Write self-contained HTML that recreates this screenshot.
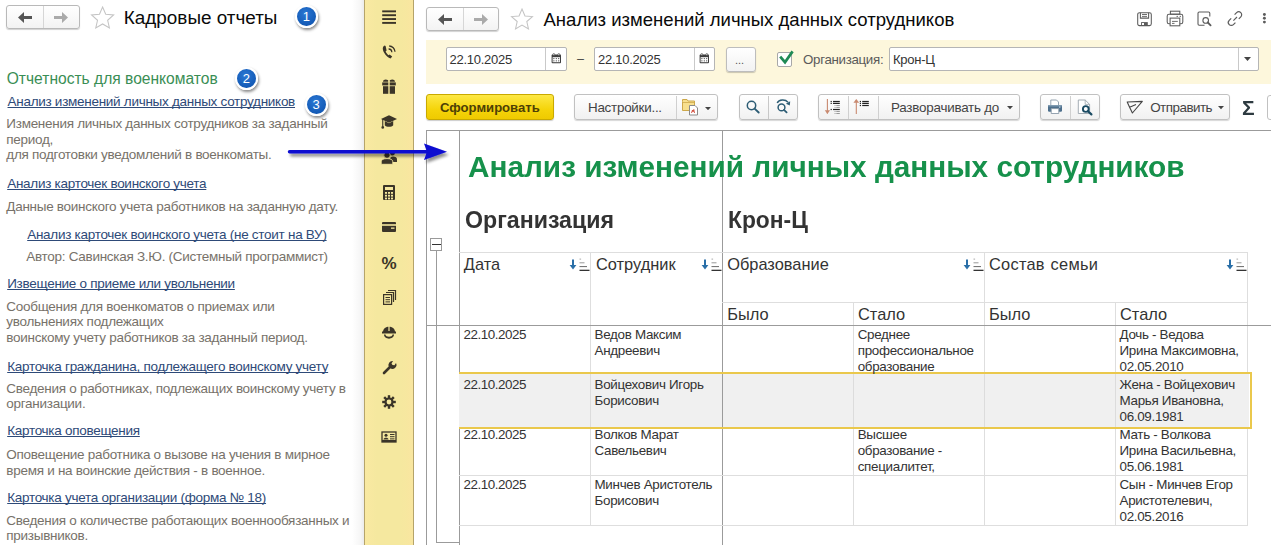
<!DOCTYPE html>
<html><head><meta charset="utf-8"><style>
html,body{margin:0;padding:0;width:1271px;height:545px;overflow:hidden;background:#fff}
body{position:relative;font-family:"Liberation Sans",sans-serif}
.a{position:absolute;display:block}
.t{position:absolute;white-space:nowrap;font-family:"Liberation Sans",sans-serif}
.badge{border-radius:50%;background:radial-gradient(circle at 45% 35%,#2a78d4,#1258b4 75%);border:2.5px solid #fff;box-sizing:border-box;box-shadow:1px 2px 3px rgba(0,0,0,.45);color:#fff;font:13px/19.5px "Liberation Sans",sans-serif;text-align:center}
</style></head><body>
<div class="a" style="left:0px;top:0px;width:364px;height:545px;background:#fff"></div>
<div class="a" style="left:352px;top:0px;width:12px;height:545px;background:linear-gradient(90deg,rgba(0,0,0,0),rgba(0,0,0,.035) 70%,rgba(0,0,0,.08))"></div>
<div class="a" style="left:6px;top:5px;width:74px;height:24px;border:1px solid #b9b9b9;border-radius:3px;background:linear-gradient(#ffffff,#f3f3f3);box-shadow:0 1px 1px rgba(0,0,0,.18);box-sizing:border-box"></div>
<div class="a" style="left:43px;top:6px;width:1px;height:22px;background:#d6d6d6"></div>
<svg class="a" style="left:18px;top:12px;" width="14" height="11" viewBox="0 0 14 11"><path d="M0 5.5 L6 0 L6 4 L14 4 L14 7 L6 7 L6 11 Z" fill="#555"/></svg>
<svg class="a" style="left:54px;top:12px;" width="14" height="11" viewBox="0 0 14 11"><path d="M14 5.5 L8 0 L8 4 L0 4 L0 7 L8 7 L8 11 Z" fill="#aaa"/></svg>
<svg class="a" style="left:88.80000000000001px;top:5px;" width="27.2" height="27.2" viewBox="0 0 27.2 27.2"><path d="M13.60 2.00 L16.74 9.28 L24.63 10.02 L18.67 15.25 L20.42 22.98 L13.60 18.94 L6.78 22.98 L8.53 15.25 L2.57 10.02 L10.46 9.28 Z" fill="none" stroke="#c4c4c4" stroke-width="1.05" stroke-linejoin="miter"/></svg>
<div class="t" style="left:123.8px;top:8.50px;font-size:18.9px;line-height:18.9px;color:#0a0a0a;font-weight:400;">Кадровые отчеты</div>
<div class="a badge" style="left:295.0px;top:4.9px;width:22.8px;height:22.8px">1</div>
<div class="t" style="left:6.7px;top:70.59px;font-size:15.6px;line-height:15.6px;color:#3a8e55;font-weight:400;">Отчетность для военкоматов</div>
<div class="a badge" style="left:234.9px;top:67.1px;width:22.8px;height:22.8px">2</div>
<div class="t" style="left:7.5px;top:95.17px;font-size:13.5px;line-height:13.5px;color:#2e4a78;font-weight:400;letter-spacing:-0.28px;text-decoration:underline;text-decoration-skip-ink:none;text-underline-offset:0.6px">Анализ изменений личных данных сотрудников</div>
<div class="a badge" style="left:304.8px;top:93.19999999999999px;width:22.8px;height:22.8px">3</div>
<div class="t" style="left:6.3px;top:116.37px;font-size:13.5px;line-height:15.5px;color:#77726a;font-weight:400;letter-spacing:-0.28px;">Изменения личных данных сотрудников за заданный</div>
<div class="t" style="left:6.3px;top:131.87px;font-size:13.5px;line-height:15.5px;color:#77726a;font-weight:400;letter-spacing:-0.28px;">период,</div>
<div class="t" style="left:6.3px;top:147.37px;font-size:13.5px;line-height:15.5px;color:#77726a;font-weight:400;letter-spacing:-0.28px;">для подготовки уведомлений в военкоматы.</div>
<div class="t" style="left:7.2px;top:177.07px;font-size:13.5px;line-height:13.5px;color:#2e4a78;font-weight:400;letter-spacing:-0.28px;text-decoration:underline;text-decoration-skip-ink:none;text-underline-offset:0.6px">Анализ карточек воинского учета</div>
<div class="t" style="left:6.3px;top:198.67px;font-size:13.5px;line-height:15.5px;color:#77726a;font-weight:400;letter-spacing:-0.28px;">Данные воинского учета работников на заданную дату.</div>
<div class="t" style="left:27.2px;top:227.77px;font-size:13.5px;line-height:13.5px;color:#2e4a78;font-weight:400;letter-spacing:-0.28px;text-decoration:underline;text-decoration-skip-ink:none;text-underline-offset:0.6px">Анализ карточек воинского учета (не стоит на ВУ)</div>
<div class="t" style="left:26.2px;top:248.87px;font-size:13.5px;line-height:15.5px;color:#77726a;font-weight:400;letter-spacing:-0.28px;">Автор: Савинская З.Ю. (Системный программист)</div>
<div class="t" style="left:7.2px;top:277.17px;font-size:13.5px;line-height:13.5px;color:#2e4a78;font-weight:400;letter-spacing:-0.28px;text-decoration:underline;text-decoration-skip-ink:none;text-underline-offset:0.6px">Извещение о приеме или увольнении</div>
<div class="t" style="left:6.3px;top:298.57px;font-size:13.5px;line-height:15.5px;color:#77726a;font-weight:400;letter-spacing:-0.28px;">Сообщения для военкоматов о приемах или</div>
<div class="t" style="left:6.3px;top:314.07px;font-size:13.5px;line-height:15.5px;color:#77726a;font-weight:400;letter-spacing:-0.28px;">увольнениях подлежащих</div>
<div class="t" style="left:6.3px;top:329.57px;font-size:13.5px;line-height:15.5px;color:#77726a;font-weight:400;letter-spacing:-0.28px;">воинскому учету работников за заданный период.</div>
<div class="t" style="left:7.2px;top:359.77px;font-size:13.5px;line-height:13.5px;color:#2e4a78;font-weight:400;letter-spacing:-0.28px;text-decoration:underline;text-decoration-skip-ink:none;text-underline-offset:0.6px">Карточка гражданина, подлежащего воинскому учету</div>
<div class="t" style="left:6.3px;top:380.77px;font-size:13.5px;line-height:15.5px;color:#77726a;font-weight:400;letter-spacing:-0.28px;">Сведения о работниках, подлежащих воинскому учету в</div>
<div class="t" style="left:6.3px;top:396.27px;font-size:13.5px;line-height:15.5px;color:#77726a;font-weight:400;letter-spacing:-0.28px;">организации.</div>
<div class="t" style="left:7.2px;top:424.37px;font-size:13.5px;line-height:13.5px;color:#2e4a78;font-weight:400;letter-spacing:-0.28px;text-decoration:underline;text-decoration-skip-ink:none;text-underline-offset:0.6px">Карточка оповещения</div>
<div class="t" style="left:6.3px;top:446.82px;font-size:13.5px;line-height:15.8px;color:#77726a;font-weight:400;letter-spacing:-0.28px;">Оповещение работника о вызове на учения в мирное</div>
<div class="t" style="left:6.3px;top:462.62px;font-size:13.5px;line-height:15.8px;color:#77726a;font-weight:400;letter-spacing:-0.28px;">время и на воинские действия - в военное.</div>
<div class="t" style="left:7.2px;top:490.87px;font-size:13.5px;line-height:13.5px;color:#2e4a78;font-weight:400;letter-spacing:-0.28px;text-decoration:underline;text-decoration-skip-ink:none;text-underline-offset:0.6px">Карточка учета организации (форма № 18)</div>
<div class="t" style="left:6.3px;top:512.67px;font-size:13.5px;line-height:15.7px;color:#77726a;font-weight:400;letter-spacing:-0.28px;">Сведения о количестве работающих военнообязанных и</div>
<div class="t" style="left:6.3px;top:528.37px;font-size:13.5px;line-height:15.7px;color:#77726a;font-weight:400;letter-spacing:-0.28px;">призывников.</div>
<div class="a" style="left:364px;top:0px;width:50px;height:545px;background:linear-gradient(90deg,#f9e9a2,#f5e89f 25%,#f5e89f 75%,#f9e6a0);border-left:1px solid #b5a46a;border-right:1px solid #b5a46a;box-sizing:border-box"></div>
<svg class="a" style="left:380.0px;top:9.0px;" width="18" height="16" viewBox="0 0 18 16"><rect x="2.2" y="1.40" width="13.8" height="1.9" fill="#3b3528"/><rect x="2.2" y="5.25" width="13.8" height="1.9" fill="#3b3528"/><rect x="2.2" y="9.10" width="13.8" height="1.9" fill="#3b3528"/><rect x="2.2" y="12.95" width="13.8" height="1.9" fill="#3b3528"/></svg>
<svg class="a" style="left:380.0px;top:44.0px;" width="18" height="16" viewBox="0 0 18 16"><path d="M4.6 1.6 C2.6 2.6 2.2 5.2 4 8.6 C5.8 12 8.4 14.2 10.6 14.4 L12.2 12.6 L9.6 10.4 L8.6 11.2 C7.4 10.4 6.2 8.8 5.6 7.4 L6.6 6.4 L5.6 2 Z" fill="#3b3528"/><path d="M8.6 5 A3.2 3.2 0 0 1 11.8 8.2" stroke="#3b3528" stroke-width="1.3" fill="none"/><path d="M9.2 2 A6 6 0 0 1 15 7.8" stroke="#3b3528" stroke-width="1.3" fill="none"/></svg>
<svg class="a" style="left:380.0px;top:78.0px;" width="18" height="16" viewBox="0 0 18 16"><path d="M3 3.8 C3 0.6 8.6 0.6 8.6 3.8 Z M9.4 3.8 C9.4 0.6 15 0.6 15 3.8 Z" fill="#3b3528"/><rect x="2.2" y="4.4" width="13.6" height="3" fill="#3b3528"/><rect x="3" y="8.2" width="12" height="7.6" fill="#3b3528"/><rect x="8.3" y="3" width="1.4" height="13" fill="#f5e89f"/></svg>
<svg class="a" style="left:380.0px;top:114.0px;" width="18" height="16" viewBox="0 0 18 16"><path d="M1 5 L9 1.2 L17 5 L9 8.8 Z" fill="#3b3528"/><path d="M4.8 7 L4.8 11.2 C6.2 13.4 11.8 13.4 13.2 11.2 L13.2 7 L9 9.2 Z" fill="#3b3528"/><rect x="2.2" y="5" width="1.1" height="7.5" fill="#3b3528"/><circle cx="2.75" cy="13.4" r="1.3" fill="#3b3528"/></svg>
<svg class="a" style="left:380.0px;top:149.0px;" width="18" height="16" viewBox="0 0 18 16"><circle cx="12.3" cy="3.8" r="2.6" fill="#3b3528"/><path d="M10 13 V10.5 C10 8.5 11 7.6 13 7.6 C15.5 7.6 17 8.5 17 10.5 V13 Z" fill="#3b3528"/><g stroke="#f5e89f" stroke-width="0.9"><circle cx="7" cy="6.2" r="3.2" fill="#3b3528"/><path d="M1.2 15.3 V12.8 C1.2 10.6 3.5 9.6 7 9.6 C10.5 9.6 12.8 10.6 12.8 12.8 V15.3 Z" fill="#3b3528"/></g></svg>
<svg class="a" style="left:380.0px;top:184.0px;" width="18" height="16" viewBox="0 0 18 16"><rect x="3" y="1" width="12" height="15" rx="1" fill="#3b3528"/><rect x="5" y="3" width="8" height="3" fill="#f5e89f"/><rect x="5" y="8.0" width="2" height="1.8" fill="#f5e89f"/><rect x="5" y="10.8" width="2" height="1.8" fill="#f5e89f"/><rect x="5" y="13.6" width="2" height="1.8" fill="#f5e89f"/><rect x="8" y="8.0" width="2" height="1.8" fill="#f5e89f"/><rect x="8" y="10.8" width="2" height="1.8" fill="#f5e89f"/><rect x="8" y="13.6" width="2" height="1.8" fill="#f5e89f"/><rect x="11" y="8.0" width="2" height="1.8" fill="#f5e89f"/><rect x="11" y="10.8" width="2" height="1.8" fill="#f5e89f"/><rect x="11" y="13.6" width="2" height="1.8" fill="#f5e89f"/></svg>
<svg class="a" style="left:380.0px;top:219.0px;" width="18" height="16" viewBox="0 0 18 16"><rect x="2" y="3" width="14" height="10" rx="1" fill="#3b3528"/><rect x="2" y="5.2" width="14" height="1.6" fill="#f5e89f"/><rect x="11" y="8.5" width="3.5" height="1.3" fill="#f5e89f"/></svg>
<div class="t" style="left:380px;top:255px;font-size:17px;line-height:18px;font-weight:700;color:#3b3528;width:18px;text-align:center">%</div>
<svg class="a" style="left:380.0px;top:289.0px;" width="18" height="16" viewBox="0 0 18 16"><path d="M8 1.5 H15.5 V11" fill="none" stroke="#3b3528" stroke-width="1.2"/><path d="M6 3.5 H13.5 V13" fill="none" stroke="#3b3528" stroke-width="1.2"/><rect x="3.6" y="5.6" width="8" height="9.8" fill="none" stroke="#3b3528" stroke-width="1.2"/><path d="M5.5 8.5 H10 M5.5 10.7 H10 M5.5 12.9 H10" stroke="#3b3528" stroke-width="1"/></svg>
<svg class="a" style="left:380.0px;top:324.0px;" width="18" height="16" viewBox="0 0 18 16"><path d="M3 8 C3 1 15 1 15 8 Z" fill="#3b3528"/><rect x="2" y="7.5" width="14" height="2" fill="#3b3528"/><path d="M4 10.5 C4 16 14 16 14 10.5 L12.5 10.5 C12.5 13.5 5.5 13.5 5.5 10.5 Z" fill="#3b3528"/><rect x="8.4" y="2" width="1.2" height="5" fill="#f5e89f"/></svg>
<svg class="a" style="left:380.0px;top:359.0px;" width="18" height="16" viewBox="0 0 18 16"><path d="M4 14 L10 8" stroke="#3b3528" stroke-width="2.6" stroke-linecap="round"/><path d="M9 8 A4 4 0 0 1 13 2 L11.5 4.5 L12.5 6 L14.5 6.3 L16 4 A4 4 0 0 1 10 9 Z" fill="#3b3528"/></svg>
<svg class="a" style="left:380.0px;top:394.0px;" width="18" height="16" viewBox="0 0 18 16"><circle cx="9" cy="8" r="4.6" fill="#3b3528"/><rect x="7.8" y="1.2" width="2.4" height="13.6" fill="#3b3528" transform="rotate(0 9 8)"/><rect x="7.8" y="1.2" width="2.4" height="13.6" fill="#3b3528" transform="rotate(45 9 8)"/><rect x="7.8" y="1.2" width="2.4" height="13.6" fill="#3b3528" transform="rotate(90 9 8)"/><rect x="7.8" y="1.2" width="2.4" height="13.6" fill="#3b3528" transform="rotate(135 9 8)"/><circle cx="9" cy="8" r="2.4" fill="#f5e89f"/></svg>
<svg class="a" style="left:380.0px;top:429.0px;" width="18" height="16" viewBox="0 0 18 16"><rect x="2" y="3" width="14" height="10" fill="none" stroke="#3b3528" stroke-width="1.3"/><rect x="2" y="11" width="14" height="2" fill="#3b3528"/><circle cx="6" cy="6.3" r="1.5" fill="#3b3528"/><path d="M3.5 10.5 C3.5 8 8.5 8 8.5 10.5 Z" fill="#3b3528"/><path d="M10 5.5 H14.5 M10 7.7 H14.5 M10 9.9 H14.5" stroke="#3b3528" stroke-width="1"/></svg>
<div class="a" style="left:414px;top:0px;width:857px;height:545px;background:#fff"></div>
<div class="a" style="left:426px;top:7px;width:73px;height:24px;border:1px solid #b9b9b9;border-radius:3px;background:linear-gradient(#ffffff,#f3f3f3);box-shadow:0 1px 1px rgba(0,0,0,.18);box-sizing:border-box"></div>
<div class="a" style="left:463px;top:8px;width:1px;height:22px;background:#d6d6d6"></div>
<svg class="a" style="left:438px;top:14px;" width="14" height="11" viewBox="0 0 14 11"><path d="M0 5.5 L6 0 L6 4 L14 4 L14 7 L6 7 L6 11 Z" fill="#555"/></svg>
<svg class="a" style="left:474px;top:14px;" width="14" height="11" viewBox="0 0 14 11"><path d="M14 5.5 L8 0 L8 4 L0 4 L0 7 L8 7 L8 11 Z" fill="#aaa"/></svg>
<svg class="a" style="left:509px;top:7px;" width="26" height="26" viewBox="0 0 26 26"><path d="M13.00 2.00 L15.97 8.91 L23.46 9.60 L17.81 14.56 L19.47 21.90 L13.00 18.06 L6.53 21.90 L8.19 14.56 L2.54 9.60 L10.03 8.91 Z" fill="none" stroke="#c4c4c4" stroke-width="1.05" stroke-linejoin="miter"/></svg>
<div class="t" style="left:543.5px;top:10.90px;font-size:18.55px;line-height:18.55px;color:#0a0a0a;font-weight:400;">Анализ изменений личных данных сотрудников</div>
<svg class="a" style="left:1136px;top:11px;" width="17" height="16" viewBox="0 0 17 16"><rect x="1.7" y="1.7" width="13.6" height="12.9" rx="1.8" fill="none" stroke="#5c5c5c" stroke-width="1.05"/><path d="M4.4 1.7 V7.1 H12.6 V1.7" fill="none" stroke="#5c5c5c" stroke-width="1.05"/><path d="M6 3.5 H11 M6 5.4 H11" stroke="#5c5c5c" stroke-width="0.9"/><rect x="5.1" y="11.1" width="6.7" height="3.5" fill="#5c5c5c"/><rect x="6" y="12" width="2" height="2" fill="#fff"/></svg>
<svg class="a" style="left:1166px;top:10px;" width="18" height="17" viewBox="0 0 18 17"><rect x="4.4" y="1.2" width="9.4" height="3" fill="none" stroke="#5c5c5c" stroke-width="1.05"/><rect x="1.2" y="4.2" width="15.6" height="9.6" rx="1.8" fill="none" stroke="#5c5c5c" stroke-width="1.05"/><rect x="4.1" y="8.1" width="9.7" height="7.7" fill="#fff" stroke="#5c5c5c" stroke-width="1.05"/><path d="M6 11.4 H11.8 M6 13.4 H8.5" stroke="#5c5c5c" stroke-width="0.9"/><path d="M10.5 6.4 H12 M13.6 6.4 H15" stroke="#5c5c5c" stroke-width="0.9"/></svg>
<svg class="a" style="left:1196px;top:10px;" width="17" height="17" viewBox="0 0 17 17"><path d="M8.5 15.3 H3.2 A1.2 1.2 0 0 1 2 14.1 V3.2 A1.2 1.2 0 0 1 3.2 2 H12.6 A1.2 1.2 0 0 1 13.8 3.2 V6.6" fill="none" stroke="#5c5c5c" stroke-width="1.1"/><circle cx="9.7" cy="10.4" r="2.8" fill="#fff" stroke="#5c5c5c" stroke-width="1.1"/><path d="M11.8 12.5 L14.6 15.3" stroke="#5c5c5c" stroke-width="1.8" stroke-linecap="round"/></svg>
<svg class="a" style="left:1226px;top:10px;" width="17" height="17" viewBox="0 0 17 17"><path d="M7.4 10.6 L11 7" stroke="#5c5c5c" stroke-width="1.1"/><path d="M8.6 4.6 L10.6 2.6 A2.9 2.9 0 0 1 14.8 6.8 L12.8 8.8" fill="none" stroke="#5c5c5c" stroke-width="1.2"/><path d="M9.4 12.6 L7.4 14.6 A2.9 2.9 0 0 1 3.2 10.4 L5.2 8.4" fill="none" stroke="#5c5c5c" stroke-width="1.2"/></svg>
<svg class="a" style="left:1262px;top:12px;" width="5" height="14" viewBox="0 0 5 14"><circle cx="2.4" cy="2.5" r="1.45" fill="#5c5c5c"/><circle cx="2.4" cy="6.3" r="1.45" fill="#5c5c5c"/><circle cx="2.4" cy="10.1" r="1.45" fill="#5c5c5c"/></svg>
<div class="a" style="left:426px;top:40px;width:845px;height:43.5px;background:#fdf7dc"></div>
<div class="a" style="left:445.5px;top:47.3px;width:121px;height:24px;background:#fff;border:1px solid #b5b5b5;border-radius:2px;box-sizing:border-box"></div>
<div class="a" style="left:545.0px;top:48.3px;width:1px;height:22.0px;background:#c9c9c9"></div>
<div class="t" style="left:449.5px;top:53.20px;font-size:13px;line-height:13px;color:#333;font-weight:400;letter-spacing:-0.27px">22.10.2025</div>
<svg class="a" style="left:550.6px;top:52.6px;" width="11" height="11" viewBox="0 0 11 11"><rect x="0.6" y="1.6" width="9.4" height="8.6" rx="0.9" fill="#3e3e3e"/><rect x="1.6" y="4.2" width="7.4" height="5" fill="#fff"/><circle cx="2.9" cy="5.6" r="0.62" fill="#3e3e3e"/><circle cx="2.9" cy="7.8" r="0.62" fill="#3e3e3e"/><circle cx="5.3" cy="5.6" r="0.62" fill="#3e3e3e"/><circle cx="5.3" cy="7.8" r="0.62" fill="#3e3e3e"/><circle cx="7.7" cy="5.6" r="0.62" fill="#3e3e3e"/><circle cx="7.7" cy="7.8" r="0.62" fill="#3e3e3e"/><circle cx="2.8" cy="1.4" r="0.9" fill="#fff" stroke="#3e3e3e" stroke-width="0.6"/><circle cx="7.8" cy="1.4" r="0.9" fill="#fff" stroke="#3e3e3e" stroke-width="0.6"/></svg>
<div class="t" style="left:577px;top:53.42px;font-size:12.5px;line-height:12.5px;color:#444;font-weight:400;">–</div>
<div class="a" style="left:594px;top:47.3px;width:121px;height:24px;background:#fff;border:1px solid #b5b5b5;border-radius:2px;box-sizing:border-box"></div>
<div class="a" style="left:693.5px;top:48.3px;width:1px;height:22.0px;background:#c9c9c9"></div>
<div class="t" style="left:598px;top:53.20px;font-size:13px;line-height:13px;color:#333;font-weight:400;letter-spacing:-0.27px">22.10.2025</div>
<svg class="a" style="left:699.3px;top:52.6px;" width="11" height="11" viewBox="0 0 11 11"><rect x="0.6" y="1.6" width="9.4" height="8.6" rx="0.9" fill="#3e3e3e"/><rect x="1.6" y="4.2" width="7.4" height="5" fill="#fff"/><circle cx="2.9" cy="5.6" r="0.62" fill="#3e3e3e"/><circle cx="2.9" cy="7.8" r="0.62" fill="#3e3e3e"/><circle cx="5.3" cy="5.6" r="0.62" fill="#3e3e3e"/><circle cx="5.3" cy="7.8" r="0.62" fill="#3e3e3e"/><circle cx="7.7" cy="5.6" r="0.62" fill="#3e3e3e"/><circle cx="7.7" cy="7.8" r="0.62" fill="#3e3e3e"/><circle cx="2.8" cy="1.4" r="0.9" fill="#fff" stroke="#3e3e3e" stroke-width="0.6"/><circle cx="7.8" cy="1.4" r="0.9" fill="#fff" stroke="#3e3e3e" stroke-width="0.6"/></svg>
<div class="a" style="left:726.2px;top:46.5px;width:29.5px;height:25px;border:1px solid #bdbdbd;border-radius:3px;background:linear-gradient(#fff,#f2f2f2);box-shadow:0 1px 1px rgba(0,0,0,.2);box-sizing:border-box"></div>
<div class="t" style="left:735px;top:54.69px;font-size:11px;line-height:11px;color:#555;font-weight:400;">...</div>
<div class="a" style="left:777.3px;top:52.3px;width:14.8px;height:14.5px;background:#fff;border:1px solid #a8a8a8;border-radius:2px;box-sizing:border-box"></div>
<svg class="a" style="left:778px;top:48px;" width="16" height="18" viewBox="0 0 16 18"><path d="M2.2 8.6 L7 14.2 L14.6 3.4" fill="none" stroke="#1f8a55" stroke-width="2.7"/></svg>
<div class="t" style="left:803px;top:52.74px;font-size:13.3px;line-height:13.3px;color:#5a5a5a;font-weight:400;letter-spacing:-0.3px">Организация:</div>
<div class="a" style="left:889px;top:47.2px;width:370px;height:24.3px;background:#fff;border:1px solid #b5b5b5;border-radius:2px;box-sizing:border-box"></div>
<div class="a" style="left:1238px;top:48.2px;width:1px;height:22.299999999999997px;background:#c9c9c9"></div>
<div class="t" style="left:893px;top:53.10px;font-size:13px;line-height:13px;color:#333;font-weight:400;letter-spacing:-0.27px">Крон-Ц</div>
<svg class="a" style="left:1244px;top:57px;" width="8" height="5" viewBox="0 0 8 5"><path d="M0 0 H7 L3.5 4 Z" fill="#444"/></svg>
<div class="a" style="left:426.3px;top:94px;width:127.5px;height:25.8px;border:1px solid #c9a900;border-radius:3px;background:linear-gradient(#fde845,#f5d40a 60%,#efca00);box-shadow:0 1px 1px rgba(0,0,0,.2);box-sizing:border-box"></div>
<div class="t" style="left:440px;top:100.91px;font-size:13.1px;line-height:13.1px;color:#4d4006;font-weight:700;">Сформировать</div>
<div class="a" style="left:574.4px;top:94px;width:143.3px;height:25.5px;border:1px solid #c1c1c1;border-radius:3px;background:linear-gradient(#fff,#f1f1f1);box-shadow:0 1px 1px rgba(0,0,0,.16);box-sizing:border-box;"></div>
<div class="a" style="left:676.4px;top:95.5px;width:1px;height:23.0px;background:#d0d0d0"></div>
<div class="t" style="left:588px;top:100.96px;font-size:13.4px;line-height:13.4px;color:#444;font-weight:400;letter-spacing:-0.25px">Настройки...</div>
<svg class="a" style="left:681px;top:98px;" width="20" height="18" viewBox="0 0 20 18"><path d="M1.5 3.5 V1.5 H6 L7 3 H13.5 V12.5 H1.5 Z" fill="#f7df8e" stroke="#cda84a" stroke-width="1"/><path d="M1.5 4.5 H13.5" stroke="#cda84a" stroke-width="0.8"/><path d="M8.5 7.5 H14 L16.5 10 V17 H8.5 Z" fill="#fff" stroke="#8a8a8a" stroke-width="1"/><path d="M10.5 15 L11.5 12 L12 14 L12.8 11.5 L13.5 15" stroke="#d04a3a" stroke-width="0.9" fill="none"/></svg>
<svg class="a" style="left:705px;top:106.6px;" width="6" height="3.5" viewBox="0 0 6 3.5"><path d="M0 0 H6 L3 3.2 Z" fill="#444"/></svg>
<div class="a" style="left:738.5px;top:94px;width:59.3px;height:25.5px;border:1px solid #c1c1c1;border-radius:3px;background:linear-gradient(#fff,#f1f1f1);box-shadow:0 1px 1px rgba(0,0,0,.16);box-sizing:border-box;"></div>
<div class="a" style="left:768px;top:95.5px;width:1px;height:23.0px;background:#c8c8c8"></div>
<svg class="a" style="left:745px;top:98px;" width="18" height="18" viewBox="0 0 18 18"><circle cx="6.5" cy="7.5" r="4.2" fill="none" stroke="#2d5d75" stroke-width="1.5"/><path d="M9.6 10.6 L13.7 14.5" stroke="#2d5d75" stroke-width="1.9" stroke-linecap="round"/></svg>
<svg class="a" style="left:775px;top:97px;" width="18" height="18" viewBox="0 0 18 18"><circle cx="6.5" cy="10.4" r="3.4" fill="none" stroke="#2d5d75" stroke-width="1.5"/><path d="M9 12.9 L11.6 15.4" stroke="#2d5d75" stroke-width="1.8" stroke-linecap="round"/><path d="M2.2 6 C4 2.5 10 2 13 5.2" fill="none" stroke="#2d5d75" stroke-width="1.5"/><path d="M15.2 4.2 L14.8 8.6 L10.9 6.8 Z" fill="#2d5d75"/></svg>
<div class="a" style="left:818.3px;top:94px;width:201.4px;height:25.5px;border:1px solid #c1c1c1;border-radius:3px;background:linear-gradient(#fff,#f1f1f1);box-shadow:0 1px 1px rgba(0,0,0,.16);box-sizing:border-box;"></div>
<div class="a" style="left:848.4px;top:95.5px;width:1px;height:23.0px;background:#d0d0d0"></div>
<div class="a" style="left:878px;top:95.5px;width:1px;height:23.0px;background:#d0d0d0"></div>
<svg class="a" style="left:824px;top:97px;" width="20" height="20" viewBox="0 0 20 20"><path d="M3.4 2 V16.5" stroke="#c98a70" stroke-width="1.1"/><path d="M0.8 13.2 L3.4 17 L6 13.2 Z" fill="#c98a70"/><rect x="6.6" y="3.9" width="1.2" height="1.2" fill="#222"/><rect x="9" y="3.9" width="6.8" height="1.2" fill="#222"/><rect x="6.6" y="5.800000000000001" width="1.2" height="1.2" fill="#222"/><rect x="9" y="5.800000000000001" width="6.8" height="1.2" fill="#222"/><rect x="6.6" y="11.9" width="1.2" height="1.2" fill="#222"/><rect x="9" y="11.9" width="6.8" height="1.2" fill="#222"/><rect x="10.6" y="8.05" width="0.9" height="0.9" fill="#888"/><rect x="12.3" y="8.0" width="3.5" height="1" fill="#999"/><rect x="10.6" y="9.950000000000001" width="0.9" height="0.9" fill="#888"/><rect x="12.3" y="9.9" width="3.5" height="1" fill="#999"/><rect x="10.6" y="14.05" width="0.9" height="0.9" fill="#888"/><rect x="12.3" y="14.0" width="3.5" height="1" fill="#999"/><rect x="10.6" y="16.05" width="0.9" height="0.9" fill="#888"/><rect x="12.3" y="16.0" width="3.5" height="1" fill="#999"/></svg>
<svg class="a" style="left:852px;top:97px;" width="20" height="20" viewBox="0 0 20 20"><path d="M4.3 3 V17" stroke="#c98a70" stroke-width="1.1"/><path d="M1.4 5.8 L4.3 2 L7.2 5.8 Z" fill="#c98a70"/><rect x="7.8" y="3.9" width="1.2" height="1.2" fill="#222"/><rect x="10.2" y="3.9" width="6.6" height="1.2" fill="#222"/><rect x="7.8" y="5.800000000000001" width="1.2" height="1.2" fill="#222"/><rect x="10.2" y="5.800000000000001" width="6.6" height="1.2" fill="#222"/><rect x="7.8" y="7.9" width="1.2" height="1.2" fill="#222"/><rect x="10.2" y="7.9" width="6.6" height="1.2" fill="#222"/></svg>
<div class="t" style="left:891px;top:100.96px;font-size:13.4px;line-height:13.4px;color:#444;font-weight:400;letter-spacing:-0.22px">Разворачивать до</div>
<svg class="a" style="left:1006.6px;top:106.4px;" width="6" height="3.5" viewBox="0 0 6 3.5"><path d="M0 0 H6 L3 3.2 Z" fill="#444"/></svg>
<div class="a" style="left:1040.4px;top:94px;width:59.2px;height:25.5px;border:1px solid #c1c1c1;border-radius:3px;background:linear-gradient(#fff,#f1f1f1);box-shadow:0 1px 1px rgba(0,0,0,.16);box-sizing:border-box;"></div>
<div class="a" style="left:1070.4px;top:95.5px;width:1px;height:23.0px;background:#d0d0d0"></div>
<svg class="a" style="left:1047px;top:98px;" width="17" height="17" viewBox="0 0 17 17"><path d="M3.8 7.5 V2 H9.5 L11.5 4 V7.5" fill="#fff" stroke="#8a9aa8" stroke-width="0.9"/><rect x="1" y="7" width="14" height="6.7" rx="1.2" fill="#4d6f8c"/><rect x="1" y="7" width="14" height="1.6" rx="0.8" fill="#7f9ab0"/><rect x="12" y="8.6" width="1.4" height="1" fill="#cfe0ec"/><path d="M4.2 10.6 H11.8 V15.5 H4.2 Z" fill="#fff" stroke="#8a9aa8" stroke-width="0.9"/></svg>
<svg class="a" style="left:1077px;top:98px;" width="17" height="18" viewBox="0 0 17 18"><path d="M1.3 2 H8.2 L12.6 6.4 V15.5 H1.3 Z" fill="#fff" stroke="#9aa4ac" stroke-width="0.9"/><path d="M8.2 2 V6.4 H12.6" fill="none" stroke="#9aa4ac" stroke-width="0.8"/><circle cx="8.8" cy="11" r="2.9" fill="#fff" stroke="#1b4b63" stroke-width="1.9"/><path d="M11 13.2 L14.4 16.4" stroke="#1b4b63" stroke-width="2.2" stroke-linecap="round"/></svg>
<div class="a" style="left:1120.4px;top:94px;width:110px;height:25.5px;border:1px solid #c1c1c1;border-radius:3px;background:linear-gradient(#fff,#f1f1f1);box-shadow:0 1px 1px rgba(0,0,0,.16);box-sizing:border-box;"></div>
<svg class="a" style="left:1126px;top:99px;" width="18" height="16" viewBox="0 0 18 16"><path d="M1.2 3 L16.3 2.4 L6.4 14 L3.6 8.2 Z M3.6 8.2 L10 5.6" fill="none" stroke="#444" stroke-width="1.1" stroke-linejoin="round"/></svg>
<div class="t" style="left:1150.2px;top:100.96px;font-size:13.4px;line-height:13.4px;color:#444;font-weight:400;letter-spacing:-0.5px">Отправить</div>
<svg class="a" style="left:1218.4px;top:106.4px;" width="6" height="3.5" viewBox="0 0 6 3.5"><path d="M0 0 H6 L3 3.2 Z" fill="#444"/></svg>
<div class="t" style="left:1242.2px;top:97.87px;font-size:20px;line-height:20px;color:#2d3a40;font-weight:700;transform:scale(1.05,1);transform-origin:0 16.93px;">Σ</div>
<div class="a" style="left:1267.4px;top:94.5px;width:10px;height:25px;border:1px solid #c1c1c1;border-radius:3px;background:#fff;box-sizing:border-box"></div>
<div class="a" style="left:426px;top:130px;width:845px;height:1px;background:#9b9b9b"></div>
<div class="a" style="left:426px;top:130px;width:1px;height:415px;background:#9b9b9b"></div>
<div class="a" style="left:459px;top:130px;width:1px;height:415px;background:#9b9b9b"></div>
<div class="a" style="left:722px;top:130px;width:1px;height:415px;background:#9b9b9b"></div>
<div class="a" style="left:459px;top:252px;width:789px;height:1px;background:#dedede"></div>
<div class="a" style="left:722px;top:302px;width:526px;height:1px;background:#dedede"></div>
<div class="a" style="left:590px;top:252px;width:1px;height:273px;background:#dedede"></div>
<div class="a" style="left:853px;top:302px;width:1px;height:223px;background:#dedede"></div>
<div class="a" style="left:984px;top:252px;width:1px;height:273px;background:#dedede"></div>
<div class="a" style="left:1115px;top:302px;width:1px;height:223px;background:#dedede"></div>
<div class="a" style="left:1247px;top:252px;width:1px;height:273px;background:#dedede"></div>
<div class="a" style="left:426px;top:325px;width:845px;height:1px;background:#9b9b9b"></div>
<div class="a" style="left:459px;top:375px;width:789px;height:1px;background:#dedede"></div>
<div class="a" style="left:459px;top:425px;width:789px;height:1px;background:#dedede"></div>
<div class="a" style="left:459px;top:475px;width:789px;height:1px;background:#dedede"></div>
<div class="a" style="left:459px;top:525px;width:789px;height:1px;background:#dedede"></div>
<div class="a" style="left:430px;top:238.3px;width:12.4px;height:12.4px;border:1px solid #9a9a9a;box-sizing:border-box;background:#fff"></div>
<div class="a" style="left:432.2px;top:243.7px;width:8.6px;height:1.3px;background:#333"></div>
<div class="a" style="left:436px;top:250px;width:1px;height:292px;background:#9b9b9b"></div>
<div class="a" style="left:436px;top:542px;width:24px;height:1px;background:#9b9b9b"></div>
<div class="t" style="left:467.5px;top:152.44px;font-size:30.2px;line-height:30.2px;color:#16914b;font-weight:700;transform:scale(0.985,1);transform-origin:0 25.56px;">Анализ изменений личных данных сотрудников</div>
<div class="t" style="left:465.2px;top:209.39px;font-size:23.4px;line-height:23.4px;color:#333;font-weight:700;transform:scale(0.99,1);transform-origin:0 19.81px;">Организация</div>
<div class="t" style="left:728px;top:209.39px;font-size:23.4px;line-height:23.4px;color:#333;font-weight:700;transform:scale(0.975,1);transform-origin:0 19.81px;">Крон-Ц</div>
<div class="t" style="left:463.8px;top:256.42px;font-size:16.4px;line-height:16.4px;color:#333;font-weight:400;">Дата</div>
<div class="t" style="left:596px;top:256.42px;font-size:16.4px;line-height:16.4px;color:#333;font-weight:400;">Сотрудник</div>
<div class="t" style="left:727.2px;top:256.42px;font-size:16.4px;line-height:16.4px;color:#333;font-weight:400;">Образование</div>
<div class="t" style="left:989px;top:256.42px;font-size:16.4px;line-height:16.4px;color:#333;font-weight:400;word-spacing:1px;letter-spacing:0.25px">Состав семьи</div>
<svg class="a" style="left:568.5px;top:257.5px;" width="21" height="14" viewBox="0 0 21 14"><path d="M4 1.5 V8" stroke="#2a6fa8" stroke-width="2"/><path d="M0.6 7 L4 11.6 L7.4 7 Z" fill="#2a6fa8"/><rect x="10.5" y="0.6" width="1.6" height="1" fill="#aaa"/><rect x="10.5" y="4.3" width="5" height="1" fill="#999"/><rect x="10.5" y="8.0" width="7.5" height="1.1" fill="#777"/><rect x="10.5" y="11.7" width="10" height="1.3" fill="#333"/></svg>
<svg class="a" style="left:700.5px;top:257.5px;" width="21" height="14" viewBox="0 0 21 14"><path d="M4 1.5 V8" stroke="#2a6fa8" stroke-width="2"/><path d="M0.6 7 L4 11.6 L7.4 7 Z" fill="#2a6fa8"/><rect x="10.5" y="0.6" width="1.6" height="1" fill="#aaa"/><rect x="10.5" y="4.3" width="5" height="1" fill="#999"/><rect x="10.5" y="8.0" width="7.5" height="1.1" fill="#777"/><rect x="10.5" y="11.7" width="10" height="1.3" fill="#333"/></svg>
<svg class="a" style="left:963px;top:257.5px;" width="21" height="14" viewBox="0 0 21 14"><path d="M4 1.5 V8" stroke="#2a6fa8" stroke-width="2"/><path d="M0.6 7 L4 11.6 L7.4 7 Z" fill="#2a6fa8"/><rect x="10.5" y="0.6" width="1.6" height="1" fill="#aaa"/><rect x="10.5" y="4.3" width="5" height="1" fill="#999"/><rect x="10.5" y="8.0" width="7.5" height="1.1" fill="#777"/><rect x="10.5" y="11.7" width="10" height="1.3" fill="#333"/></svg>
<svg class="a" style="left:1226px;top:257.5px;" width="21" height="14" viewBox="0 0 21 14"><path d="M4 1.5 V8" stroke="#2a6fa8" stroke-width="2"/><path d="M0.6 7 L4 11.6 L7.4 7 Z" fill="#2a6fa8"/><rect x="10.5" y="0.6" width="1.6" height="1" fill="#aaa"/><rect x="10.5" y="4.3" width="5" height="1" fill="#999"/><rect x="10.5" y="8.0" width="7.5" height="1.1" fill="#777"/><rect x="10.5" y="11.7" width="10" height="1.3" fill="#333"/></svg>
<div class="t" style="left:727.2px;top:306.32px;font-size:16.4px;line-height:16.4px;color:#333;font-weight:400;">Было</div>
<div class="t" style="left:989px;top:306.32px;font-size:16.4px;line-height:16.4px;color:#333;font-weight:400;">Было</div>
<div class="t" style="left:858px;top:306.32px;font-size:16.4px;line-height:16.4px;color:#333;font-weight:400;">Стало</div>
<div class="t" style="left:1120px;top:306.32px;font-size:16.4px;line-height:16.4px;color:#333;font-weight:400;">Стало</div>
<div class="a" style="left:459px;top:374px;width:790px;height:52.5px;background:#f0f0f0"></div>
<div class="a" style="left:590px;top:374px;width:1px;height:53px;background:#dcdcdc"></div>
<div class="a" style="left:722px;top:372px;width:1px;height:57px;background:#9b9b9b"></div>
<div class="a" style="left:853px;top:374px;width:1px;height:53px;background:#dcdcdc"></div>
<div class="a" style="left:984px;top:374px;width:1px;height:53px;background:#dcdcdc"></div>
<div class="a" style="left:1115px;top:374px;width:1px;height:53px;background:#dcdcdc"></div>
<div class="a" style="left:459px;top:372px;width:792.5px;height:56.6px;border:2.2px solid #eac84c;border-left:none;box-sizing:border-box"></div>
<div class="t" style="left:463.5px;top:326.51px;font-size:13.4px;line-height:16.1px;color:#333;font-weight:400;letter-spacing:-0.45px">22.10.2025</div>
<div class="t" style="left:594.5px;top:326.51px;font-size:13.4px;line-height:16.1px;color:#333;font-weight:400;letter-spacing:-0.3px">Ведов Максим</div>
<div class="t" style="left:594.5px;top:342.61px;font-size:13.4px;line-height:16.1px;color:#333;font-weight:400;letter-spacing:-0.3px">Андреевич</div>
<div class="t" style="left:857.7px;top:326.51px;font-size:13.4px;line-height:16.1px;color:#333;font-weight:400;letter-spacing:-0.3px">Среднее</div>
<div class="t" style="left:857.7px;top:342.61px;font-size:13.4px;line-height:16.1px;color:#333;font-weight:400;letter-spacing:-0.3px">профессиональное</div>
<div class="t" style="left:857.7px;top:358.71px;font-size:13.4px;line-height:16.1px;color:#333;font-weight:400;letter-spacing:-0.3px">образование</div>
<div class="t" style="left:1119.5px;top:326.51px;font-size:13.4px;line-height:16.1px;color:#333;font-weight:400;letter-spacing:-0.3px">Дочь - Ведова</div>
<div class="t" style="left:1119.5px;top:342.61px;font-size:13.4px;line-height:16.1px;color:#333;font-weight:400;letter-spacing:-0.3px">Ирина Максимовна,</div>
<div class="t" style="left:1119.5px;top:358.71px;font-size:13.4px;line-height:16.1px;color:#333;font-weight:400;letter-spacing:-0.3px">02.05.2010</div>
<div class="t" style="left:463.5px;top:376.51px;font-size:13.4px;line-height:16.1px;color:#333;font-weight:400;letter-spacing:-0.45px">22.10.2025</div>
<div class="t" style="left:594.5px;top:376.51px;font-size:13.4px;line-height:16.1px;color:#333;font-weight:400;letter-spacing:-0.3px">Войцехович Игорь</div>
<div class="t" style="left:594.5px;top:392.61px;font-size:13.4px;line-height:16.1px;color:#333;font-weight:400;letter-spacing:-0.3px">Борисович</div>
<div class="t" style="left:1119.5px;top:376.51px;font-size:13.4px;line-height:16.1px;color:#333;font-weight:400;letter-spacing:-0.3px">Жена - Войцехович</div>
<div class="t" style="left:1119.5px;top:392.61px;font-size:13.4px;line-height:16.1px;color:#333;font-weight:400;letter-spacing:-0.3px">Марья Ивановна,</div>
<div class="t" style="left:1119.5px;top:408.71px;font-size:13.4px;line-height:16.1px;color:#333;font-weight:400;letter-spacing:-0.3px">06.09.1981</div>
<div class="t" style="left:463.5px;top:426.51px;font-size:13.4px;line-height:16.1px;color:#333;font-weight:400;letter-spacing:-0.45px">22.10.2025</div>
<div class="t" style="left:594.5px;top:426.51px;font-size:13.4px;line-height:16.1px;color:#333;font-weight:400;letter-spacing:-0.3px">Волков Марат</div>
<div class="t" style="left:594.5px;top:442.61px;font-size:13.4px;line-height:16.1px;color:#333;font-weight:400;letter-spacing:-0.3px">Савельевич</div>
<div class="t" style="left:857.7px;top:426.51px;font-size:13.4px;line-height:16.1px;color:#333;font-weight:400;letter-spacing:-0.3px">Высшее</div>
<div class="t" style="left:857.7px;top:442.61px;font-size:13.4px;line-height:16.1px;color:#333;font-weight:400;letter-spacing:-0.3px">образование -</div>
<div class="t" style="left:857.7px;top:458.71px;font-size:13.4px;line-height:16.1px;color:#333;font-weight:400;letter-spacing:-0.3px">специалитет,</div>
<div class="t" style="left:1119.5px;top:426.51px;font-size:13.4px;line-height:16.1px;color:#333;font-weight:400;letter-spacing:-0.3px">Мать - Волкова</div>
<div class="t" style="left:1119.5px;top:442.61px;font-size:13.4px;line-height:16.1px;color:#333;font-weight:400;letter-spacing:-0.3px">Ирина Васильевна,</div>
<div class="t" style="left:1119.5px;top:458.71px;font-size:13.4px;line-height:16.1px;color:#333;font-weight:400;letter-spacing:-0.3px">05.06.1981</div>
<div class="t" style="left:463.5px;top:476.51px;font-size:13.4px;line-height:16.1px;color:#333;font-weight:400;letter-spacing:-0.45px">22.10.2025</div>
<div class="t" style="left:594.5px;top:476.51px;font-size:13.4px;line-height:16.1px;color:#333;font-weight:400;letter-spacing:-0.3px">Минчев Аристотель</div>
<div class="t" style="left:594.5px;top:492.61px;font-size:13.4px;line-height:16.1px;color:#333;font-weight:400;letter-spacing:-0.3px">Борисович</div>
<div class="t" style="left:1119.5px;top:476.51px;font-size:13.4px;line-height:16.1px;color:#333;font-weight:400;letter-spacing:-0.3px">Сын - Минчев Егор</div>
<div class="t" style="left:1119.5px;top:492.61px;font-size:13.4px;line-height:16.1px;color:#333;font-weight:400;letter-spacing:-0.3px">Аристотелевич,</div>
<div class="t" style="left:1119.5px;top:508.71px;font-size:13.4px;line-height:16.1px;color:#333;font-weight:400;letter-spacing:-0.3px">02.05.2016</div>
<svg class="a" style="left:284px;top:138px;" width="170" height="28" viewBox="0 0 170 28"><defs><filter id="sh" x="-10%" y="-50%" width="120%" height="200%"><feGaussianBlur in="SourceAlpha" stdDeviation="1.6"/><feOffset dx="2" dy="3"/><feComponentTransfer><feFuncA type="linear" slope="0.45"/></feComponentTransfer><feMerge><feMergeNode/><feMergeNode in="SourceGraphic"/></feMerge></filter></defs><g filter="url(#sh)"><path d="M5.5 13.7 H150" stroke="#0a0ad0" stroke-width="3.4" stroke-linecap="round"/><path d="M140 5.5 L163 13.7 L140 22 L143 13.7 Z" fill="#0a0ad0"/></g></svg>
</body></html>
